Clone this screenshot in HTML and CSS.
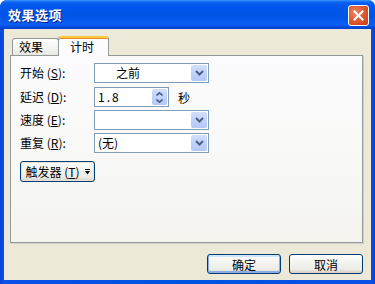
FILE: index.html
```html
<!DOCTYPE html>
<html lang="zh-CN">
<head>
    <meta charset="UTF-8">
    <title>效果选项</title>
    <link rel="stylesheet" href="styles.css">
</head>
<body>
    <div class="window">
        <div class="titlebar">
            <span class="title">效果选项</span>
            <button class="close-btn" aria-label="关闭">
                <svg width="11" height="11" viewBox="0 0 11 11">
                    <path d="M1.5 1.5 L9.5 9.5 M9.5 1.5 L1.5 9.5" stroke="#fff" stroke-width="2" stroke-linecap="square"/>
                </svg>
            </button>
        </div>

        <div class="client">
            <div class="tabs">
                <div class="tab">效果</div>
                <div class="tab active">计时</div>
            </div>

            <div class="panel">
                <div class="row">
                    <label class="label">开始 (<u>S</u>):</label>
                    <div class="combo">
                        <span class="value indent">之前</span>
                        <span class="drop"><svg width="9" height="6" viewBox="0 0 9 6"><path d="M1 1 L4.5 4.5 L8 1" fill="none" stroke="#4d6185" stroke-width="2"/></svg></span>
                    </div>
                </div>
                <div class="row">
                    <label class="label">延迟 (<u>D</u>):</label>
                    <div class="spin">
                        <span class="value mono">1.8</span>
                        <span class="spin-btns">
                            <svg width="7" height="4" viewBox="0 0 7 4"><path d="M0.5 3.5 L3.5 0.8 L6.5 3.5" fill="none" stroke="#4d6185" stroke-width="1.6"/></svg>
                            <svg width="7" height="4" viewBox="0 0 7 4"><path d="M0.5 0.5 L3.5 3.2 L6.5 0.5" fill="none" stroke="#4d6185" stroke-width="1.6"/></svg>
                        </span>
                    </div>
                    <span class="unit">秒</span>
                </div>
                <div class="row">
                    <label class="label">速度 (<u>E</u>):</label>
                    <div class="combo">
                        <span class="value"></span>
                        <span class="drop"><svg width="9" height="6" viewBox="0 0 9 6"><path d="M1 1 L4.5 4.5 L8 1" fill="none" stroke="#4d6185" stroke-width="2"/></svg></span>
                    </div>
                </div>
                <div class="row">
                    <label class="label">重复 (<u>R</u>):</label>
                    <div class="combo">
                        <span class="value">(无)</span>
                        <span class="drop"><svg width="9" height="6" viewBox="0 0 9 6"><path d="M1 1 L4.5 4.5 L8 1" fill="none" stroke="#4d6185" stroke-width="2"/></svg></span>
                    </div>
                </div>

                <button class="xp-btn trigger-btn">
                    <span class="btn-text">触发器 (<u>T</u>)</span>
                    <svg width="5" height="6" viewBox="0 0 5 6"><rect x="0" y="0" width="5" height="1" fill="#000"/><path d="M0 2 H5 L2.5 5.5 Z" fill="#000"/></svg>
                </button>
            </div>

            <div class="actions">
                <button class="xp-btn default">确定</button>
                <button class="xp-btn">取消</button>
            </div>
        </div>
    </div>
</body>
</html>
```

FILE: styles.css
```css
body {
    margin: 0;
    font-family: "Noto Sans CJK SC", "Liberation Sans", sans-serif;
    font-size: 12px;
    color: #000;
    background: #fff;
}

.window {
    width: 375px;
    height: 284px;
    display: flex;
    flex-direction: column;
    border-radius: 7px 7px 0 0;
    background: linear-gradient(to right, #0842d6 0%, #0a4fe6 1%, #0054e3 50%, #0a4fe6 99%, #0842d6 100%);
    overflow: hidden;
}

.titlebar {
    height: 29px;
    display: flex;
    align-items: center;
    justify-content: space-between;
    padding: 0 6px 0 8px;
    box-sizing: border-box;
    background: linear-gradient(to bottom, #3d95ff 0%, #0a62f0 8%, #0058ee 20%, #0054e6 55%, #0a5ef2 85%, #0048d8 95%, #0040c8 100%);
}

.title {
    color: #fff;
    font-weight: bold;
    font-size: 13px;
    letter-spacing: 0.5px;
    text-shadow: 1px 1px 0 #0a1e8a;
}

.close-btn {
    width: 21px;
    height: 21px;
    margin-top: 1px;
    padding: 0;
    border: 1px solid #fff;
    border-radius: 3px;
    background: radial-gradient(circle at 35% 35%, #ef8a6a 0%, #e05a34 45%, #c9401a 100%);
    display: flex;
    align-items: center;
    justify-content: center;
}

.client {
    flex: 1;
    margin: 0 4px 4px 4px;
    padding: 7px 8px 0 6px;
    background: #ece9d8;
    display: flex;
    flex-direction: column;
}

.tabs {
    display: flex;
    align-items: flex-end;
    height: 19px;
    margin-left: 2px;
    position: relative;
    z-index: 1;
}

.tab {
    height: 17px;
    box-sizing: border-box;
    padding: 0 6px;
    line-height: 16px;
    border: 1px solid #919b9c;
    border-bottom: none;
    border-radius: 3px 3px 0 0;
    background: linear-gradient(to bottom, #fff 0%, #f3f3ef 60%, #e8e7e0 100%);
}

.tab.active {
    height: 20px;
    width: 51px;
    margin-left: -1px;
    margin-bottom: -1px;
    padding: 0 11px;
    line-height: 17px;
    border-top: 2px solid #ffc83c;
    box-shadow: inset 0 1px 0 #e68b2c;
    background: #fcfcfe;
}

.tab:first-child {
    width: 47px;
}

.panel {
    height: 188px;
    box-sizing: border-box;
    padding: 7px 9px;
    border: 1px solid #919b9c;
    box-shadow: 1px 1px 0 #d2d0c6;
    background: linear-gradient(to bottom, #fcfcfe 0%, #f7f7f4 70%, #f4f3ee 100%);
    display: flex;
    flex-direction: column;
    align-items: flex-start;
    gap: 3px;
}

.row {
    display: flex;
    align-items: center;
    height: 20px;
}

.row:first-child {
    margin-bottom: 1px;
}

.label {
    width: 74px;
    line-height: 20px;
    white-space: nowrap;
}

.combo,
.spin {
    height: 20px;
    box-sizing: border-box;
    border: 1px solid #7f9db9;
    background: #fff;
    display: flex;
    align-items: stretch;
}

.combo {
    width: 115px;
}

.spin {
    width: 75px;
}

.value {
    flex: 1;
    padding-left: 3px;
    line-height: 18px;
}

.value.indent {
    padding-left: 21px;
}

.value.mono {
    letter-spacing: 2px;
}

.drop {
    width: 16px;
    margin: 1px;
    border-radius: 2px;
    background: linear-gradient(to bottom, #d2defc 0%, #c1d3fb 50%, #b4c8f6 100%);
    display: flex;
    align-items: center;
    justify-content: center;
}

.spin-btns {
    width: 15px;
    margin: 1px;
    border-radius: 2px;
    background: linear-gradient(to bottom, #d2defc 0%, #c1d3fb 50%, #b4c8f6 100%);
    display: flex;
    flex-direction: column;
    align-items: center;
    justify-content: center;
    gap: 3px;
}

.unit {
    margin-left: 9px;
}

.xp-btn {
    font-family: inherit;
    font-size: 12px;
    color: #000;
    height: 20px;
    padding: 0;
    border: 1px solid #003c74;
    border-radius: 3px;
    background: linear-gradient(to bottom, #fff 0%, #f4f4f0 40%, #ecebe6 80%, #d6d0c5 100%);
    display: flex;
    align-items: center;
    justify-content: center;
}

.btn-text {
    white-space: nowrap;
}

.trigger-btn {
    width: 75px;
    height: 21px;
    margin-top: 5px;
    gap: 5px;
    box-shadow: inset 0 0 0 1px #e2e1da;
}

.actions {
    display: flex;
    justify-content: flex-end;
    gap: 8px;
    margin-top: 11px;
}

.actions .xp-btn {
    width: 74px;
}

.xp-btn.default {
    box-shadow: inset 0 -1px 0 1px #89ade4, inset 0 1px 0 1px #cee7ff;
}
```
